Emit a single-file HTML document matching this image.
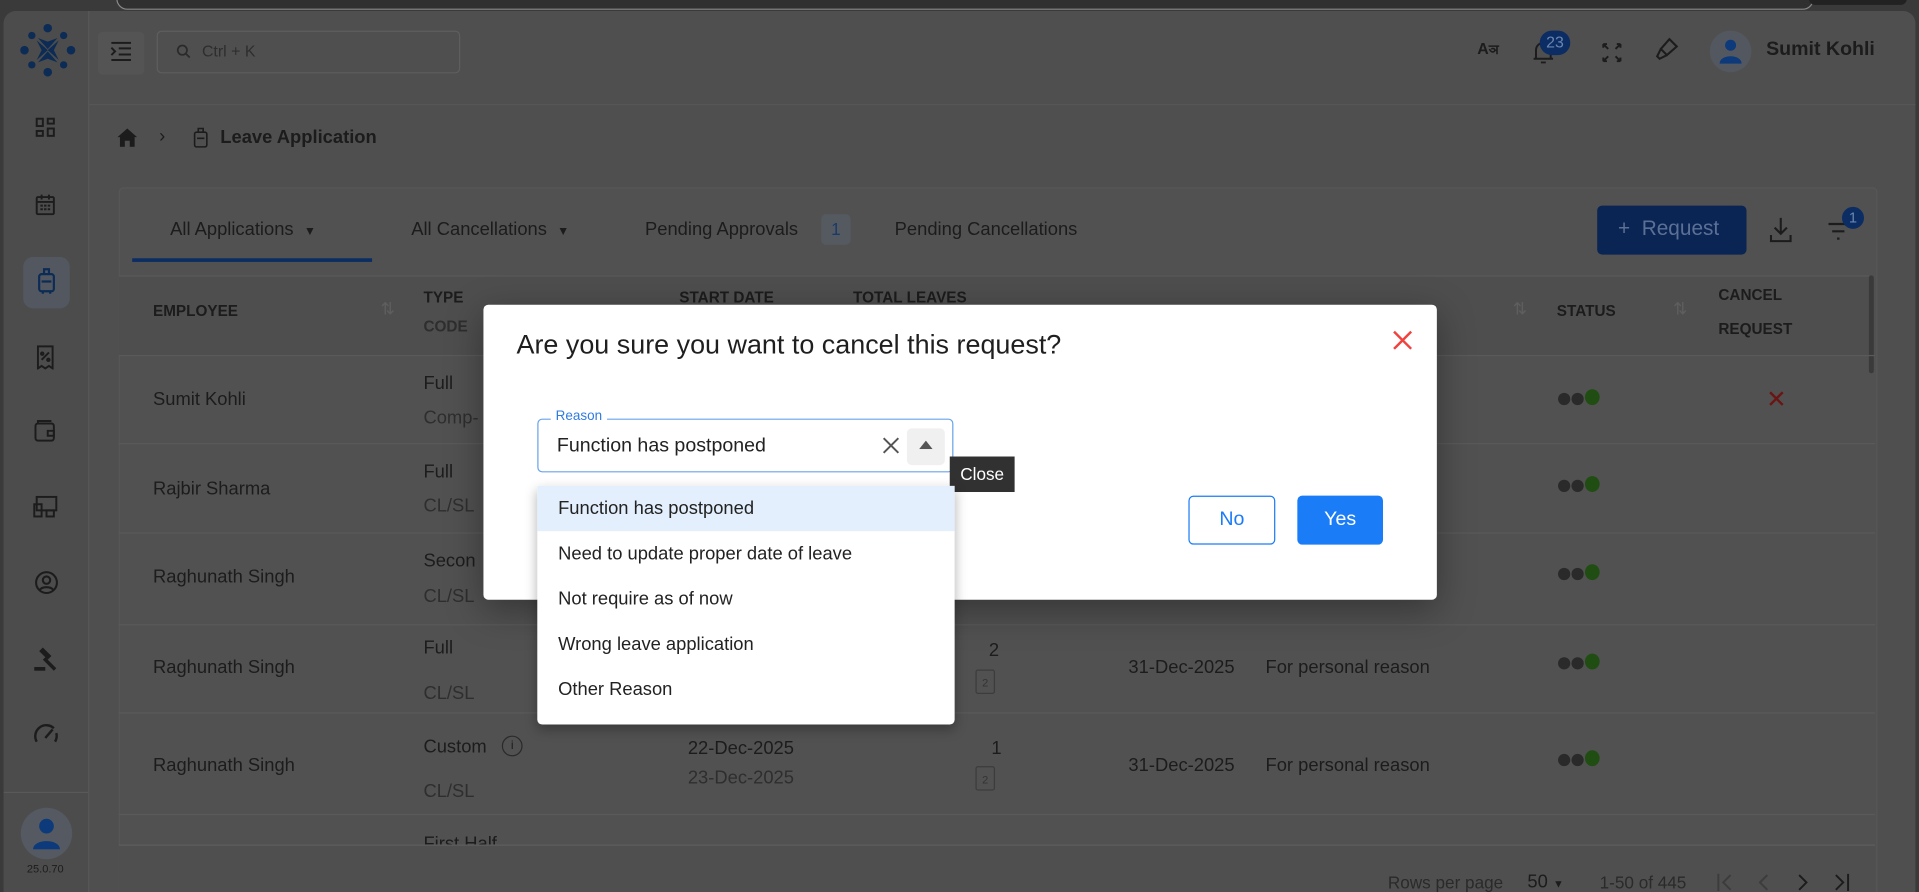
<!DOCTYPE html>
<html><head><meta charset="utf-8"><style>
html,body{margin:0;padding:0;width:1919px;height:892px;overflow:hidden;background:#3c3c3c}
#w{position:absolute;left:0;top:0;width:1568px;height:729px;transform:scale(1.2239);transform-origin:0 0;font-family:"Liberation Sans",sans-serif;color:#1c1c1c;overflow:hidden;background:#3a3a3a}
.a{position:absolute}
.t{position:absolute;white-space:nowrap}
.hd{font-size:12.5px;font-weight:bold;color:#1c1c1c}
.r{font-size:15px;color:#1c1c1c}
.s{font-size:15px;color:#2e2e2e}
.dot{display:inline-block;width:10px;height:10px;border-radius:50%;background:#2a2a2a;margin-right:1px}
.row{position:absolute;left:97px;width:1435px;border-top:1px solid #5a5a5a}
.item{position:absolute;left:0;width:341px;height:37px;line-height:37px;padding-left:17px;box-sizing:border-box;font-size:15px;color:#222}
</style></head><body><div id="w">
<div class="a" style="left:95px;top:-10px;width:1385px;height:16px;border:1px solid #888;border-radius:10px;background:#303030"></div>
<div class="a" style="left:1478px;top:-6px;width:80px;height:10px;background:#222;border-radius:6px"></div>
<div class="a" style="left:3px;top:9px;width:1562px;height:730px;background:#4f4f4f;border-radius:10px"></div>
<!-- sidebar -->
<div class="a" style="left:3px;top:9px;width:69px;height:720px;background:#4c4c4c;border-right:1px solid #595959;border-radius:10px 0 0 0"></div>
<svg class="a" style="left:16px;top:19px" width="46" height="44" viewBox="0 0 46 44"><g fill="#0d2c55"><circle cx="23" cy="4" r="3.5"/><circle cx="23" cy="40" r="3.5"/><circle cx="4" cy="22" r="3.5"/><circle cx="42" cy="22" r="3.5"/><circle cx="10" cy="10" r="3"/><circle cx="36" cy="10" r="3"/><circle cx="10" cy="34" r="3"/><circle cx="36" cy="34" r="3"/><path d="M14 14 L23 22 L14 30 L18 22Z M32 14 L23 22 L32 30 L28 22Z M15 12 L23 21 L31 12 L23 15Z M15 32 L23 23 L31 32 L23 29Z"/></g></svg>
<svg class="a" style="left:29px;top:96px" width="16" height="16" viewBox="0 0 16 16" fill="none" stroke="#1c1c1c" stroke-width="1.6"><rect x="1" y="1" width="5" height="6"/><rect x="10" y="1" width="5" height="4"/><rect x="1" y="11" width="5" height="4"/><rect x="10" y="9" width="5" height="6"/></svg>
<svg class="a" style="left:29px;top:158px" width="16" height="18" viewBox="0 0 16 18" fill="none" stroke="#1c1c1c" stroke-width="1.6"><rect x="1" y="3" width="14" height="14" rx="1"/><path d="M1 7h14M5 1v4M11 1v4M4 10h2M7 10h2M10 10h2M4 13h2M7 13h2M10 13h2"/></svg>
<div class="a" style="left:19px;top:210px;width:38px;height:42px;border-radius:8px;background:#535860"></div>
<svg class="a" style="left:30px;top:218px" width="16" height="24" viewBox="0 0 16 24" fill="none" stroke="#0d2c55" stroke-width="1.8"><rect x="2" y="6" width="12" height="14" rx="2"/><path d="M6 6V2h4v4M4 12h8M5 20v2M11 20v2"/></svg>
<svg class="a" style="left:30px;top:282px" width="14" height="20" viewBox="0 0 14 20" fill="none" stroke="#1c1c1c" stroke-width="1.6"><path d="M1 1h12v18l-3-2-3 2-3-2-3 2z M4 12l6-6"/><circle cx="4.5" cy="7" r="1"/><circle cx="9.5" cy="12" r="1"/></svg>
<svg class="a" style="left:28px;top:343px" width="18" height="18" viewBox="0 0 18 18" fill="none" stroke="#1c1c1c" stroke-width="1.6"><rect x="1" y="3" width="15" height="14" rx="2"/><path d="M3 3V1h11M11 9h5v4h-5z"/></svg>
<svg class="a" style="left:27px;top:405px" width="22" height="18" viewBox="0 0 22 18" fill="none" stroke="#1c1c1c" stroke-width="1.6"><rect x="3" y="1" width="16" height="11"/><rect x="1" y="7" width="6" height="10"/><rect x="11" y="12" width="6" height="5"/></svg>
<svg class="a" style="left:28px;top:466px" width="20" height="20" viewBox="0 0 20 20" fill="none" stroke="#1c1c1c" stroke-width="1.7"><circle cx="10" cy="10" r="8.5"/><circle cx="10" cy="8" r="3"/><path d="M4.5 16c2-3 9-3 11 0"/></svg>
<svg class="a" style="left:27px;top:527px" width="22" height="22" viewBox="0 0 22 22" fill="#1c1c1c"><path d="M8 2l7 7-3 3-7-7zM10 10l9 9-2 2-9-9z"/><rect x="1" y="18" width="9" height="3"/></svg>
<svg class="a" style="left:27px;top:590px" width="22" height="20" viewBox="0 0 22 20" fill="none" stroke="#1c1c1c" stroke-width="2"><path d="M3 16A9 9 0 0 1 17 5M19 9a9 9 0 0 1-1 7M10 13l6-7"/></svg>
<div class="a" style="left:3px;top:647px;width:69px;height:1px;background:#595959"></div>
<div class="a" style="left:17px;top:660px;width:42px;height:42px;border-radius:50%;background:#555a62"></div>
<svg class="a" style="left:26px;top:668px" width="24" height="26" viewBox="0 0 24 26" fill="#0d3a7a"><circle cx="12" cy="7" r="6"/><path d="M1 26c0-9 22-9 22 0z"/></svg>
<div class="t" style="left:22px;top:705px;font-size:9px">25.0.70</div>
<!-- header -->
<div class="a" style="left:80px;top:26px;width:38px;height:35px;background:#545454;border-radius:4px"></div>
<svg class="a" style="left:90px;top:34px" width="18" height="16" viewBox="0 0 18 16" fill="none" stroke="#1c1c1c" stroke-width="1.6"><path d="M1 1h16M7 5.5h10M7 10.5h10M1 15h16M1 5l3 3-3 3"/></svg>
<div class="a" style="left:128px;top:25px;width:246px;height:33px;border:1px solid #5e5e5e;border-radius:4px"></div>
<svg class="a" style="left:144px;top:36px" width="12" height="12" viewBox="0 0 12 12" fill="none" stroke="#2a2a2a" stroke-width="1.4"><circle cx="5" cy="5" r="3.8"/><path d="M8 8l3 3"/></svg>
<div class="t" style="left:165px;top:34px;font-size:13px;color:#2e2e2e">Ctrl + K</div>
<div class="a" style="left:72px;top:85px;width:1493px;height:1px;background:#575757"></div>
<div class="t" style="left:1207px;top:32px;font-size:13px;font-weight:bold">A<span style="font-size:11px">ञ</span></div>
<svg class="a" style="left:1253px;top:33px" width="16" height="20" viewBox="0 0 16 20" fill="none" stroke="#1c1c1c" stroke-width="1.6"><path d="M2 15V8a6 6 0 0 1 12 0v7zM0 15h16M6 18h4"/></svg>
<div class="a" style="left:1258px;top:25px;width:25px;height:20px;border-radius:10px;background:#0b2d63;color:#6a86b0;font-size:13px;text-align:center;line-height:20px">23</div>
<svg class="a" style="left:1309px;top:35px" width="16" height="16" viewBox="0 0 16 16" fill="none" stroke="#1c1c1c" stroke-width="1.6"><path d="M1 1l4 4M15 1l-4 4M1 15l4-4M15 15l-4-4M1 1h3M1 1v3M15 1h-3M15 1v3M1 15h3M1 15v-3M15 15h-3M15 15v-3"/></svg>
<svg class="a" style="left:1352px;top:30px" width="20" height="22" viewBox="0 0 20 22" fill="none" stroke="#1c1c1c" stroke-width="1.7"><path d="M12 2l6 6-8 7-5-5zM5 10l-3 6 2 2 6-3"/></svg>
<div class="a" style="left:1397px;top:25px;width:34px;height:34px;border-radius:50%;background:#535860"></div>
<svg class="a" style="left:1405px;top:31px" width="18" height="22" viewBox="0 0 18 22" fill="#0d3a7a"><circle cx="9" cy="6" r="4.5"/><path d="M0 21c0-8 18-8 18 0z"/></svg>
<div class="t" style="left:1443px;top:32px;font-size:16px;font-weight:bold">Sumit Kohli</div>
<!-- breadcrumb -->
<svg class="a" style="left:96px;top:105px" width="16" height="15" viewBox="0 0 16 15" fill="#1c1c1c"><path d="M8 0L0 7h2v8h4v-5h4v5h4V7h2z"/></svg>
<div class="t" style="left:130px;top:103px;font-size:15px">›</div>
<svg class="a" style="left:158px;top:104px" width="12" height="17" viewBox="0 0 12 17" fill="none" stroke="#1c1c1c" stroke-width="1.3"><rect x="1" y="4" width="10" height="12" rx="1.5"/><path d="M4 4V1h4v3M3 9h6"/></svg>
<div class="t" style="left:180px;top:104px;font-size:15px;font-weight:bold">Leave Application</div>
<!-- card -->
<div class="a" style="left:97px;top:153px;width:1435px;height:580px;background:#515151;border:1px solid #575757;border-radius:4px"></div>
<div class="t" style="left:139px;top:179px;font-size:15px">All Applications &nbsp;<span style="font-size:10px">▼</span></div>
<div class="a" style="left:108px;top:211px;width:196px;height:3px;background:#0b2d63"></div>
<div class="t" style="left:336px;top:179px;font-size:15px">All Cancellations &nbsp;<span style="font-size:10px">▼</span></div>
<div class="t" style="left:527px;top:179px;font-size:15px">Pending Approvals</div>
<div class="a" style="left:671px;top:175px;width:24px;height:25px;border-radius:4px;background:#555a60;color:#1a3a6a;font-size:14px;text-align:center;line-height:25px">1</div>
<div class="t" style="left:731px;top:179px;font-size:15px">Pending Cancellations</div>
<div class="a" style="left:1305px;top:168px;width:122px;height:40px;border-radius:4px;background:#0a2454"></div>
<div class="t" style="left:1322px;top:177px;font-size:17px;color:#5b7095">+&nbsp; Request</div>
<svg class="a" style="left:1445px;top:177px" width="20" height="22" viewBox="0 0 20 22" fill="none" stroke="#1c1c1c" stroke-width="1.7"><path d="M10 1v13M5 9l5 5 5-5M2 15v5h16v-5"/></svg>
<svg class="a" style="left:1493px;top:181px" width="18" height="16" viewBox="0 0 18 16" fill="none" stroke="#1c1c1c" stroke-width="1.8"><path d="M1 2h16M4 8h10M8 14h2"/></svg>
<div class="a" style="left:1505px;top:169px;width:18px;height:18px;border-radius:50%;background:#0b2d63;color:#6a86b0;font-size:12px;text-align:center;line-height:18px">1</div>
<!-- table header -->
<div class="a" style="left:97px;top:225px;width:1430px;height:65px;background:#4e4e4e;border-top:1px solid #5a5a5a"></div>
<div class="t hd" style="left:125px;top:247px">EMPLOYEE</div>
<div class="t" style="left:311px;top:244px;color:#5e5e5e;font-size:14px">⇅</div>
<div class="t hd" style="left:346px;top:236px">TYPE</div>
<div class="t hd" style="left:346px;top:260px;color:#2e2e2e">CODE</div>
<div class="t hd" style="left:555px;top:236px">START DATE</div>
<div class="t hd" style="left:697px;top:236px">TOTAL LEAVES</div>
<div class="t" style="left:1236px;top:244px;color:#5e5e5e;font-size:14px">⇅</div>
<div class="t hd" style="left:1272px;top:247px">STATUS</div>
<div class="t" style="left:1367px;top:244px;color:#5e5e5e;font-size:14px">⇅</div>
<div class="t hd" style="left:1404px;top:234px">CANCEL</div>
<div class="t hd" style="left:1404px;top:262px">REQUEST</div>
<div class="a" style="left:1527px;top:225px;width:4px;height:80px;background:#3a3a3a;border-radius:2px"></div>
<!-- rows -->
<div class="row" style="top:290px"></div>
<div class="t r" style="left:125px;top:318px">Sumit Kohli</div>
<div class="t r" style="left:346px;top:305px">Full</div><div class="t s" style="left:346px;top:333px">Comp-</div>
<div class="t" style="left:1273px;top:318px"><span class="dot"></span><span class="dot"></span><span class="dot" style="background:#1f4d12;width:12px;height:13px"></span></div>
<div class="t" style="left:1443px;top:314px;color:#6b1414;font-size:20px">✕</div>
<div class="row" style="top:362px"></div>
<div class="t r" style="left:125px;top:391px">Rajbir Sharma</div>
<div class="t r" style="left:346px;top:377px">Full</div><div class="t s" style="left:346px;top:405px">CL/SL</div>
<div class="t" style="left:1273px;top:389px"><span class="dot"></span><span class="dot"></span><span class="dot" style="background:#1f4d12;width:12px;height:13px"></span></div>
<div class="row" style="top:435px"></div>
<div class="t r" style="left:125px;top:463px">Raghunath Singh</div>
<div class="t r" style="left:346px;top:450px">Secon</div><div class="t s" style="left:346px;top:479px">CL/SL</div>
<div class="t" style="left:1273px;top:461px"><span class="dot"></span><span class="dot"></span><span class="dot" style="background:#1f4d12;width:12px;height:13px"></span></div>
<div class="row" style="top:510px"></div>
<div class="t r" style="left:125px;top:537px">Raghunath Singh</div>
<div class="t r" style="left:346px;top:521px">Full</div><div class="t s" style="left:346px;top:558px">CL/SL</div>
<div class="t r" style="left:808px;top:523px">2</div>
<div class="a" style="left:797px;top:547px;width:14px;height:18px;border:1px solid #3c3c3c;border-radius:2px;font-size:9px;text-align:center;line-height:20px;color:#333">2</div>
<div class="t r" style="left:922px;top:537px">31-Dec-2025</div>
<div class="t r" style="left:1034px;top:537px">For personal reason</div>
<div class="t" style="left:1273px;top:534px"><span class="dot"></span><span class="dot"></span><span class="dot" style="background:#1f4d12;width:12px;height:13px"></span></div>
<div class="row" style="top:582px"></div>
<div class="t r" style="left:125px;top:617px">Raghunath Singh</div>
<div class="t r" style="left:346px;top:602px">Custom</div>
<div class="a" style="left:410px;top:601px;width:15px;height:15px;border:1.5px solid #2a2a2a;border-radius:50%;font-size:10px;text-align:center;line-height:15px">i</div>
<div class="t s" style="left:346px;top:638px">CL/SL</div>
<div class="t r" style="left:562px;top:603px">22-Dec-2025</div>
<div class="t s" style="left:562px;top:627px">23-Dec-2025</div>
<div class="t r" style="left:810px;top:603px">1</div>
<div class="a" style="left:797px;top:626px;width:14px;height:18px;border:1px solid #3c3c3c;border-radius:2px;font-size:9px;text-align:center;line-height:20px;color:#333">2</div>
<div class="t r" style="left:922px;top:617px">31-Dec-2025</div>
<div class="t r" style="left:1034px;top:617px">For personal reason</div>
<div class="t" style="left:1273px;top:613px"><span class="dot"></span><span class="dot"></span><span class="dot" style="background:#1f4d12;width:12px;height:13px"></span></div>
<div class="row" style="top:665px"></div>
<div class="t r" style="left:346px;top:681px">First Half</div>
<div class="a" style="left:97px;top:690px;width:1435px;height:40px;background:#4f4f4f;border-top:1px solid #5e5e5e"></div>
<div class="t" style="left:1134px;top:713px;font-size:14px;color:#2a2a2a">Rows per page</div>
<div class="t" style="left:1248px;top:712px;font-size:15px;color:#1c1c1c">50 <span style="font-size:9px">▼</span></div>
<div class="t" style="left:1307px;top:713px;font-size:14px;color:#2a2a2a">1-50 of 445</div>
<svg class="a" style="left:1402px;top:713px" width="120" height="16" viewBox="0 0 120 16" fill="none" stroke-width="1.6"><path d="M2 1v14M12 2L6 8l6 6" stroke="#3c3c3c"/><path d="M42 2l-6 6 6 6" stroke="#3c3c3c"/><path d="M68 2l6 6-6 6" stroke="#1c1c1c"/><path d="M98 2l6 6-6 6M108 1v14" stroke="#1c1c1c"/></svg>
<!-- modal -->
<div class="a" style="left:395px;top:249px;width:779px;height:241px;background:#fff;border-radius:4px;box-shadow:0 8px 30px rgba(0,0,0,.35)"></div>
<div class="t" style="left:422px;top:269px;font-size:22px;color:#1f1f1f">Are you sure you want to cancel this request?</div>
<svg class="a" style="left:1138px;top:270px" width="16" height="16" viewBox="0 0 16 16" stroke="#f0433f" stroke-width="2"><path d="M1 1l14 14M15 1L1 15"/></svg>
<div class="a" style="left:439px;top:342px;width:340px;height:44px;border:1.5px solid #6aa4ea;border-radius:4px;box-sizing:border-box"></div>
<div class="t" style="left:450px;top:334px;font-size:11px;color:#2f7be0;background:#fff;padding:0 4px">Reason</div>
<div class="t" style="left:455px;top:356px;font-size:16px;color:#222">Function has postponed</div>
<svg class="a" style="left:721px;top:357px" width="14" height="14" viewBox="0 0 14 14" stroke="#555" stroke-width="1.6"><path d="M1 1l12 12M13 1L1 13"/></svg>
<div class="a" style="left:741px;top:350px;width:31px;height:30px;background:#f0f0f0;border-radius:4px"></div>
<svg class="a" style="left:751px;top:360px" width="11" height="7" viewBox="0 0 11 7" fill="#555"><path d="M0 7L5.5 0 11 7z"/></svg>
<div class="a" style="left:776px;top:373px;width:53px;height:29px;background:#313131;color:#fff;font-size:14px;text-align:center;line-height:29px">Close</div>
<div class="a" style="left:971px;top:405px;width:71px;height:40px;border:1px solid #1a7cf7;border-radius:4px;box-sizing:border-box;color:#1a7cf7;font-size:16px;text-align:center;line-height:38px">No</div>
<div class="a" style="left:1060px;top:405px;width:70px;height:40px;background:#1a7cf7;border-radius:4px;color:#fff;font-size:16px;text-align:center;line-height:40px">Yes</div>
<div class="a" style="left:439px;top:397px;width:341px;height:195px;background:#fff;border-radius:0 0 4px 4px;box-shadow:0 4px 10px rgba(0,0,0,.3);overflow:hidden">
<div class="item" style="top:0;background:#e3effd">Function has postponed</div>
<div class="item" style="top:37px">Need to update proper date of leave</div>
<div class="item" style="top:74px">Not require as of now</div>
<div class="item" style="top:111px">Wrong leave application</div>
<div class="item" style="top:148px">Other Reason</div>
</div>
</div></body></html>
